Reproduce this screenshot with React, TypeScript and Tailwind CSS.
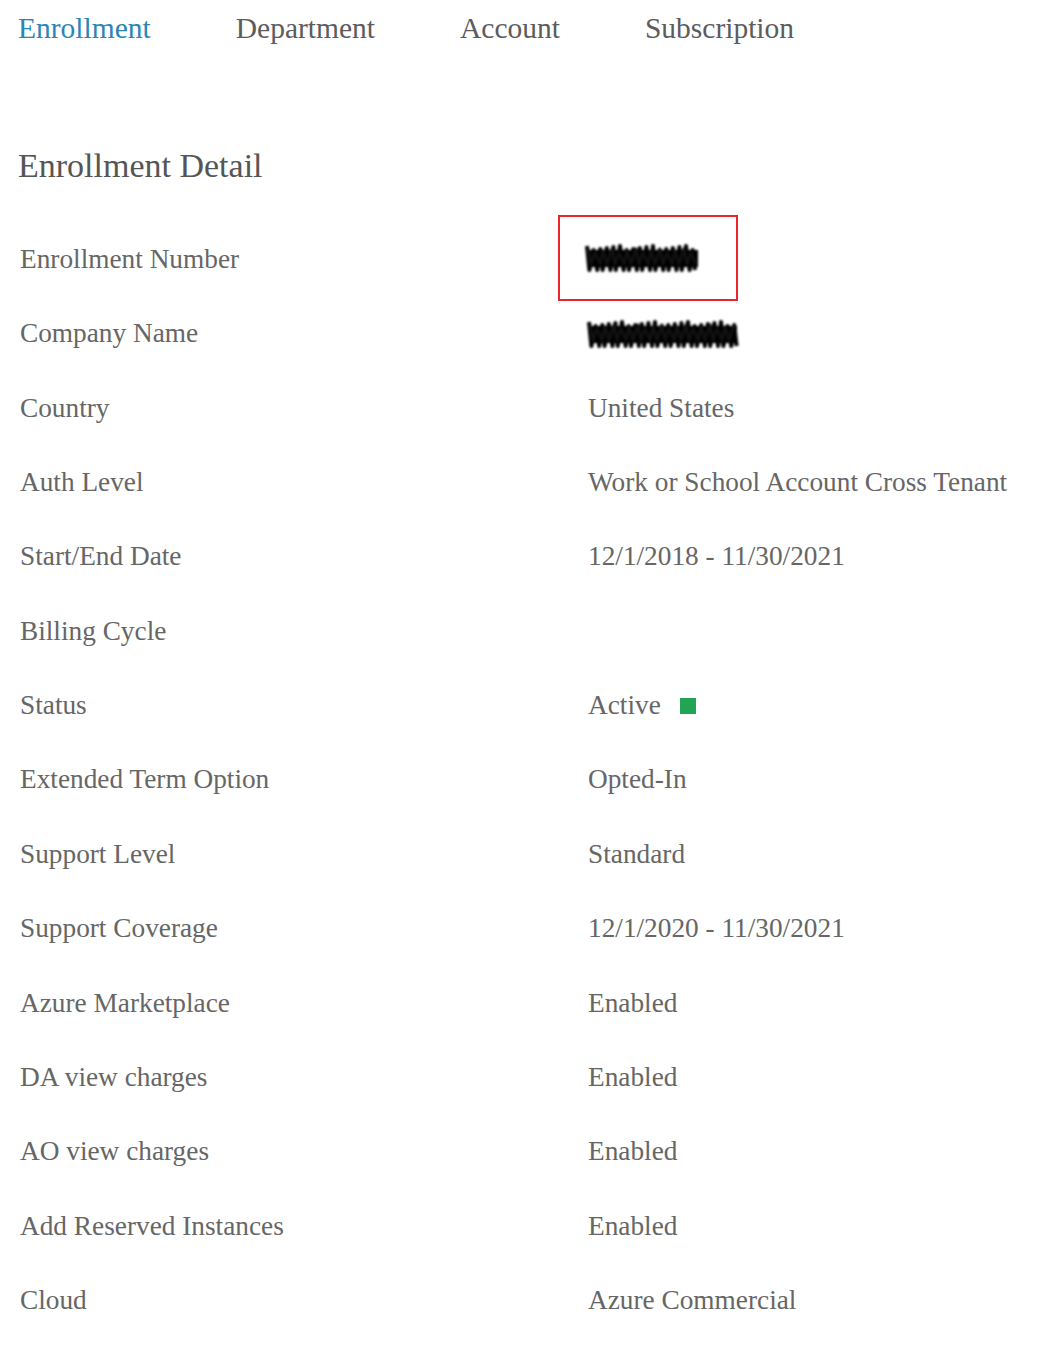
const tabs = ["Enrollment", "Department", "Account", "Subscription"];

type Row = { label: string; value?: string; kind?: "redact1" | "redact2" | "status" };

const rows: Row[] = [
  { label: "Enrollment Number", kind: "redact1" },
  { label: "Company Name", kind: "redact2" },
  { label: "Country", value: "United States" },
  { label: "Auth Level", value: "Work or School Account Cross Tenant" },
  { label: "Start/End Date", value: "12/1/2018 - 11/30/2021" },
  { label: "Billing Cycle", value: "" },
  { label: "Status", value: "Active", kind: "status" },
  { label: "Extended Term Option", value: "Opted-In" },
  { label: "Support Level", value: "Standard" },
  { label: "Support Coverage", value: "12/1/2020 - 11/30/2021" },
  { label: "Azure Marketplace", value: "Enabled" },
  { label: "DA view charges", value: "Enabled" },
  { label: "AO view charges", value: "Enabled" },
  { label: "Add Reserved Instances", value: "Enabled" },
  { label: "Cloud", value: "Azure Commercial" },
];

// scribbled-out text, drawn as dense zigzags
function Redacted({ width }: { width: number }) {
  const pts: string[] = [];
  let x = 2;
  let i = 0;
  while (x < width - 2) {
    const y = i % 2 === 0 ? 3 + ((i * 7) % 5) : 27 - ((i * 5) % 5);
    pts.push(`${x},${y}`);
    x += 2.4 + ((i * 3) % 4) * 0.6;
    i++;
  }
  const pts2: string[] = [];
  x = 3;
  i = 0;
  while (x < width - 3) {
    const y = i % 2 === 0 ? 6 + ((i * 5) % 6) : 24 - ((i * 3) % 6);
    pts2.push(`${x},${y}`);
    x += 3 + ((i * 7) % 3);
    i++;
  }
  return (
    <svg width={width} height={32} viewBox={`0 0 ${width} 32`} className="blur-[0.8px]">
      <rect x={3} y={7} width={width - 6} height={17} fill="#000" />
      <polyline points={pts.join(" ")} fill="none" stroke="#000" strokeWidth={4} strokeLinejoin="round" />
      <polyline points={pts2.join(" ")} fill="none" stroke="#111" strokeWidth={3} strokeLinejoin="round" />
    </svg>
  );
}

export default function App() {
  return (
    <div className="w-[1040px] h-[1354px] bg-white font-['Liberation_Serif',serif] overflow-hidden">
      <nav className="h-[56px] flex items-center pl-[18px] gap-[85px] text-[29.5px] text-[#5c5c5c]">
        {tabs.map((t, i) => (
          <span key={t} className={i === 0 ? "text-[#2e84b4]" : ""}>
            {t}
          </span>
        ))}
      </nav>

      <h1 className="mt-[79px] h-[60px] flex items-center pl-[18px] text-[34px] text-[#555]">
        Enrollment Detail
      </h1>

      <div className="mt-[27px] text-[27.3px] text-[#666]">
        {rows.map((r) => (
          <div key={r.label} className="h-[74.4px] grid grid-cols-[568px_1fr] items-center pl-[20px]">
            <span>{r.label}</span>
            <div className="relative flex items-center">
              {r.kind === "redact1" && (
                <>
                  <div className="absolute left-[-30px] top-[-29px] w-[180px] h-[86px] border-2 border-[#e8262b]" />
                  <div className="-ml-[3px] -mt-[1px]">
                    <Redacted width={116} />
                  </div>
                </>
              )}
              {r.kind === "redact2" && (
                <div className="-ml-[1px] mt-[3px]">
                  <Redacted width={153} />
                </div>
              )}
              {!r.kind && <span>{r.value}</span>}
              {r.kind === "status" && (
                <>
                  <span>{r.value}</span>
                  <span className="ml-[19px] w-[16px] h-[16px] bg-[#21a555]" />
                </>
              )}
            </div>
          </div>
        ))}
      </div>
    </div>
  );
}
